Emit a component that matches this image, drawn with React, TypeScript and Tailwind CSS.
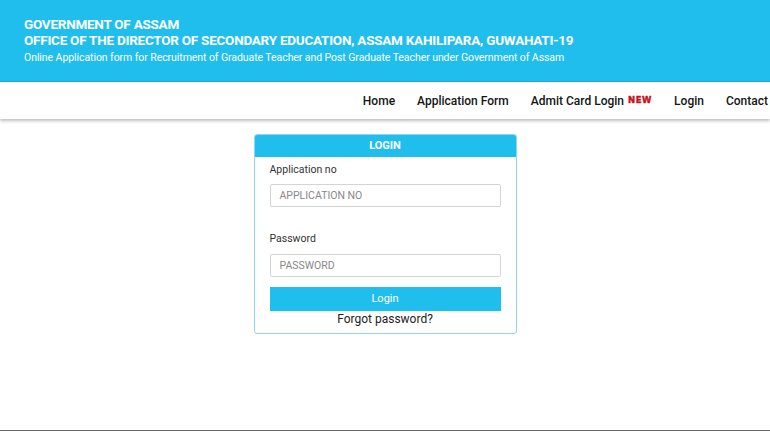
import React from "react";

export default function App() {
  return (
    <div className="w-[770px] h-[431px] bg-white relative overflow-hidden" style={{ fontFamily: "Roboto, 'Liberation Sans', sans-serif" }}>
      <header className="h-[82px] bg-[#1fbeed] border-b border-[#17a9d6] pl-[24px] pt-[16px] text-white">
        <div className="text-[13.5px] font-bold leading-[16px] tracking-[-0.25px]">GOVERNMENT OF ASSAM</div>
        <div className="text-[13.5px] font-bold leading-[16px] tracking-[-0.25px]">OFFICE OF THE DIRECTOR OF SECONDARY EDUCATION, ASSAM KAHILIPARA, GUWAHATI-19</div>
        <div className="text-[10.5px] leading-[14px] mt-[3px] tracking-[-0.07px]">Online Application form for Recruitment of Graduate Teacher and Post Graduate Teacher under Government of Assam</div>
      </header>
      <nav className="h-[37px] bg-white shadow-[0_2px_3px_rgba(0,0,0,0.25)] flex items-center justify-end gap-[22px] pr-[2px] text-[12px] font-medium text-[#151515]">
        <span>Home</span>
        <span>Application Form</span>
        <span className="flex items-center gap-[4px]"><span>Admit Card Login</span><span className="text-[8.5px] font-bold text-[#c4121c] tracking-[0.6px] [-webkit-text-stroke:0.4px_#c4121c]" style={{ fontFamily: "'DejaVu Sans', sans-serif" }}>NEW</span></span>
        <span>Login</span>
        <span>Contact</span>
      </nav>
      <main className="flex justify-center pt-[15px]">
        <div className="w-[263px] border border-[#8fd6ee] rounded-[3px] overflow-hidden">
          <div className="h-[22px] bg-[#1fbeed] text-white text-[11px] font-bold flex items-center justify-center">LOGIN</div>
          <div className="px-[15px] pt-[6px] pb-[6px] text-[#333]">
            <div className="text-[10.5px] leading-[14px]">Application no</div>
            <div className="mt-[7px] h-[23px] border border-[#d4d4d4] rounded-[2px] flex items-center px-[9px] text-[10.5px] text-[#888]">APPLICATION NO</div>
            <div className="mt-[25px] text-[10.5px] leading-[14px]">Password</div>
            <div className="mt-[8px] h-[23px] border border-[#d4d4d4] rounded-[2px] flex items-center px-[9px] text-[10.5px] text-[#888]">PASSWORD</div>
            <div className="mt-[10px] h-[24px] bg-[#1fbeed] text-white text-[11px] flex items-center justify-center">Login</div>
            <div className="text-center text-[12px] leading-[16px] text-[#222]">Forgot password?</div>
          </div>
        </div>
      </main>
      <div className="absolute left-0 right-0 bottom-0 h-[1px] bg-[#666]" />
    </div>
  );
}
